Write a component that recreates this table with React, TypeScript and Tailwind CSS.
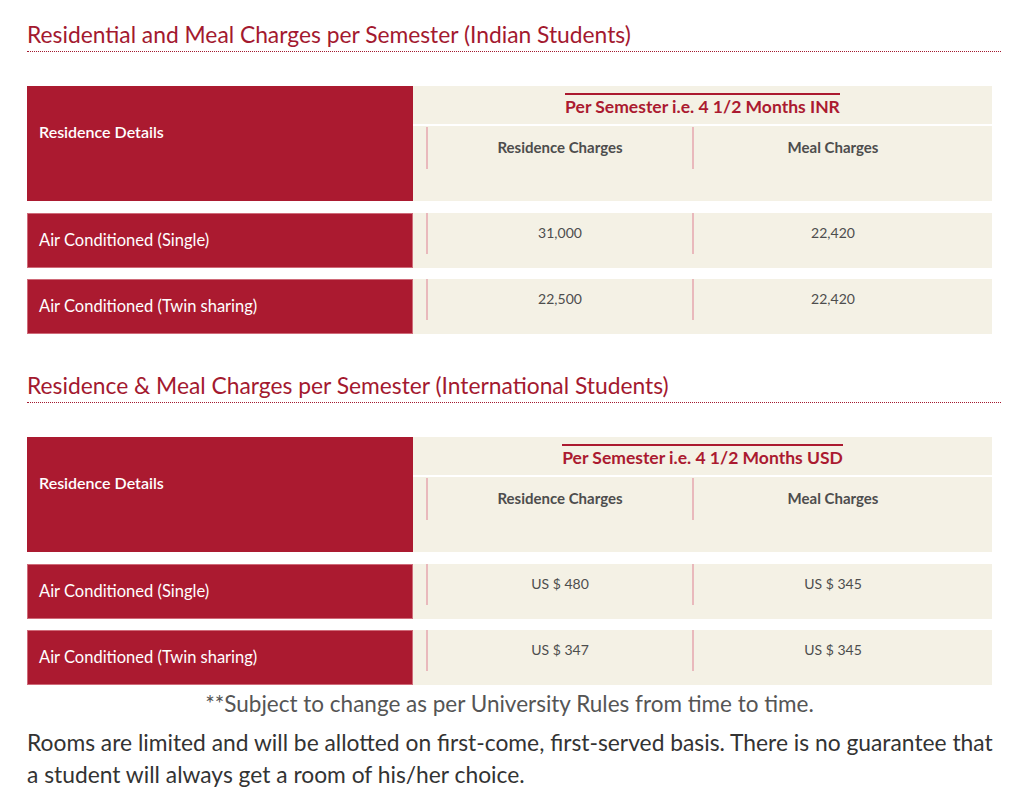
import React from 'react';

const tables = [
  {
    title: 'Residential and Meal Charges per Semester (Indian Students)',
    period: 'Per Semester i.e. 4 1/2 Months INR',
    rows: [
      { label: 'Air Conditioned (Single)', residence: '31,000', meal: '22,420' },
      { label: 'Air Conditioned (Twin sharing)', residence: '22,500', meal: '22,420' },
    ],
  },
  {
    title: 'Residence & Meal Charges per Semester (International Students)',
    period: 'Per Semester i.e. 4 1/2 Months USD',
    rows: [
      { label: 'Air Conditioned (Single)', residence: 'US $ 480', meal: 'US $ 345' },
      { label: 'Air Conditioned (Twin sharing)', residence: 'US $ 347', meal: 'US $ 345' },
    ],
  },
];

const ChargesTable = ({ table, first }: { table: (typeof tables)[number]; first: boolean }) => (
  <section className={first ? 'pt-[20px]' : 'pt-[37px]'}>
    <h2 className="text-[22.8px] leading-[28px] text-[#a3192f] pb-[3px] border-b border-dotted border-[#a3192f] w-[974px]">
      {table.title}
    </h2>

    <div className="w-[965px] mt-[34px]">
      <div className="flex h-[115px]">
        <div className="w-[386px] bg-[#ab1a30] text-white text-[16px] font-semibold pl-[12px] pt-[36px] leading-[20px]">
          Residence Details
        </div>
        <div className="flex-1 bg-[#f4f1e5] flex flex-col">
          <div className="h-[40px] border-b-2 border-white flex items-center justify-center">
            <span className="border-t-2 border-[#ab1a30] text-[#ab1a30] font-bold text-[17.5px] leading-[22px] pt-[1px]">
              {table.period}
            </span>
          </div>
          <div className="flex pl-[13px] pr-[20px] pt-[1px]">
            <div className="w-[266px] h-[42px] border-l-2 border-[#e9b9bc] text-center text-[15px] font-bold text-[#4d4d4d] pt-[10px] leading-[20px]">
              Residence Charges
            </div>
            <div className="flex-1 h-[42px] border-l-2 border-[#e9b9bc] text-center text-[15px] font-bold text-[#4d4d4d] pt-[10px] leading-[20px]">
              Meal Charges
            </div>
          </div>
        </div>
      </div>

      {table.rows.map((row, i) => (
        <div key={row.label} className={`flex h-[55px] ${i === 0 ? 'mt-[12px]' : 'mt-[11px]'}`}>
          <div className="w-[386px] bg-[#ab1a30] border border-[#cf6b79] text-white text-[16.5px] flex items-center pl-[11px]">
            {row.label}
          </div>
          <div className="flex-1 bg-[#f4f1e5] flex pl-[13px] pr-[20px]">
            <div className="w-[266px] h-[41px] border-l-2 border-[#e9b9bc] text-center text-[14px] text-[#4d4d4d] pt-[10px] leading-[20px]">
              {row.residence}
            </div>
            <div className="flex-1 h-[41px] border-l-2 border-[#e9b9bc] text-center text-[14px] text-[#4d4d4d] pt-[10px] leading-[20px]">
              {row.meal}
            </div>
          </div>
        </div>
      ))}
    </div>
  </section>
);

export default function App() {
  return (
    <div className="w-[1011px] h-[800px] bg-white pl-[27px] font-['Lato',sans-serif] overflow-hidden">
      {tables.map((t, i) => (
        <ChargesTable key={t.title} table={t} first={i === 0} />
      ))}
      <p className="w-[965px] text-center text-[22.5px] leading-[28px] text-[#555] mt-[5px]">
        **Subject to change as per University Rules from time to time.
      </p>
      <p className="w-[974px] text-[22.8px] leading-[32px] text-[#333] mt-[8px]">
        Rooms are limited and will be allotted on first-come, first-served basis. There is no guarantee that a student will
        always get a room of his/her choice.
      </p>
    </div>
  );
}
